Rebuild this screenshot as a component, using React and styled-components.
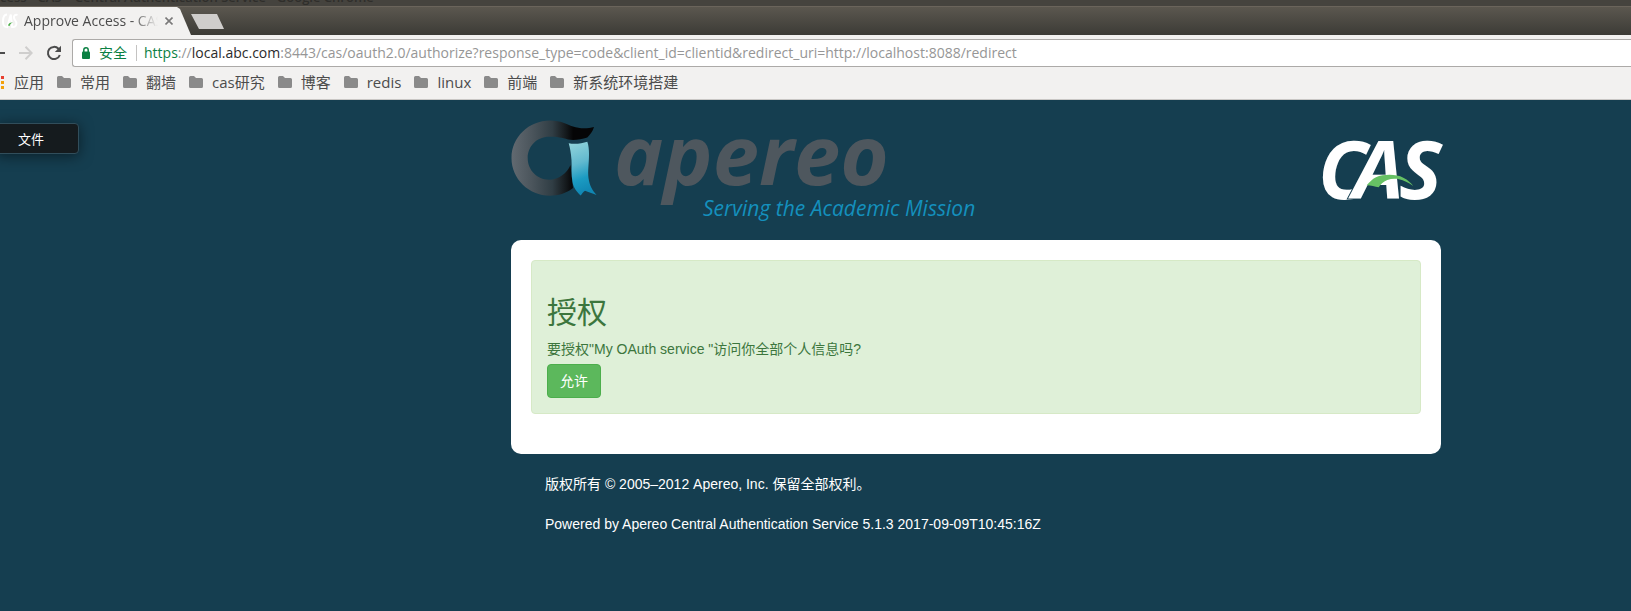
import React, { useId, useState } from 'react';
import styled, { createGlobalStyle } from 'styled-components';

const uiFont = '"Open Sans", "Noto Sans CJK SC", sans-serif';
const pageFont = '"Liberation Sans", "Noto Sans CJK SC", sans-serif';

const GlobalStyle = createGlobalStyle`
  *, *::before, *::after { box-sizing: border-box; }
  body { margin: 0; background: #153e50; overflow-x: hidden; }
`;

/* ---------- browser chrome ---------- */

const Browser = styled.div`
  display: flex;
  flex-direction: column;
  min-height: 100vh;
  font-family: ${uiFont};
  color: #4c4c4c;
`;

const TitleBar = styled.div`
  display: flex;
  align-items: flex-end;
  height: 6px;
  overflow: hidden;
  white-space: nowrap;
  background: #45433e;
  color: #2f2e2b;
  font-size: 13px;
  font-weight: 600;
  line-height: 12px;
  padding-bottom: 3px;
`;

const TabStrip = styled.div`
  display: flex;
  height: 29px;
  border-top: 1px solid #6a645b;
  background: linear-gradient(#5b574f, #3c3b36);
`;

const Tab = styled.div`
  display: flex;
  align-items: center;
  width: 191px;
  height: 28px;
  padding-left: 2px;
  background: #f2f1f0;
  clip-path: polygon(0 0, 177px 0, 180px 2px, 191px 100%, 0 100%);
`;

const TabTitle = styled.span`
  width: 134px;
  margin-left: 6px;
  overflow: hidden;
  white-space: nowrap;
  font-size: 14px;
  line-height: 20px;
  mask-image: linear-gradient(to right, #000 108px, transparent 134px);
`;

const BareButton = styled.button`
  display: inline-flex;
  align-items: center;
  justify-content: center;
  padding: 0;
  border: 0;
  background: none;
  cursor: pointer;
`;

const CloseTab = styled(BareButton)`
  width: 16px;
  height: 16px;
  margin-left: 3px;
`;

const NewTab = styled(BareButton)`
  width: 33px;
  height: 15px;
  margin-top: 7px;
  background: #cfcdcb;
  clip-path: polygon(0 0, 26px 0, 33px 100%, 8px 100%);
`;

const Toolbar = styled.div`
  display: flex;
  align-items: center;
  height: 36px;
  background: #f2f1f0;
`;

const NavButton = styled(BareButton)`
  width: ${p => p.$width}px;
  height: 28px;
  color: ${p => (p.$dim ? '#cfcecd' : '#4c4c4c')};
  justify-content: flex-start;
`;

const AddressBar = styled.form`
  display: flex;
  align-items: center;
  flex: 1;
  height: 28px;
  padding-left: 9px;
  border: 1px solid #acaaa8;
  border-right: 0;
  border-radius: 3px 0 0 3px;
  background: #fff;
  font-size: 14px;
`;

const Secure = styled.span`
  margin-left: 9px;
  padding-right: 9px;
  border-right: 1px solid #c4c3c2;
  line-height: 16px;
  font-size: 14px;
  color: #0b8043;
`;

const UrlField = styled.div`
  display: grid;
  flex: 1;
  margin-left: 7px;
  line-height: 20px;
  white-space: nowrap;

  > * { grid-area: 1 / 1; }
`;

const UrlInput = styled.input`
  width: 100%;
  padding: 0;
  border: 0;
  outline: 0;
  background: none;
  font: inherit;
  color: transparent;
  caret-color: #333;
`;

const UrlColours = styled.span`
  pointer-events: none;
  color: #969696;
`;

const Scheme = styled.span`color: #0b8043;`;
const Host = styled.span`color: #2b2b2b;`;

const Bookmarks = styled.nav`
  display: flex;
  align-items: center;
  gap: 13px;
  height: 29px;
  padding-bottom: 6px;
  border-bottom: 1px solid #c9c7c5;
  background: #f2f1f0;
`;

const Bookmark = styled.a`
  display: flex;
  align-items: center;
  gap: 9px;
  color: #4c4c4c;
  font-size: 15px;
  line-height: 20px;
  text-decoration: none;
  white-space: nowrap;
`;

/* ---------- CAS page ---------- */

const Page = styled.div`
  position: relative;
  flex: 1;
  padding: 0 0 40px 321px;
  background: #153e50;
  font-family: ${pageFont};
  font-size: 14px;
  line-height: 20px;
`;

const MenuTag = styled.button`
  position: absolute;
  top: 23px;
  left: -4px;
  width: 83px;
  height: 31px;
  padding: 0 0 0 21px;
  border: 1px solid #314e5b;
  border-radius: 4px;
  background: #151b1e;
  box-shadow: 0 2px 14px rgba(0, 0, 0, 0.5);
  color: #fff;
  font-family: ${pageFont};
  font-size: 13px;
  text-align: left;
`;

const Column = styled.div`
  max-width: 930px;
  margin: 0 auto;
`;

const Header = styled.header`
  display: flex;
  align-items: center;
  justify-content: space-between;
  padding: 19px 0;
`;

const Logo = styled.svg`
  display: block;
  flex: none;
  overflow: visible;
  font-family: "Open Sans", sans-serif;
  font-style: italic;
`;

const Card = styled.main`
  padding: 20px 20px 40px;
  border-radius: 10px;
  background: #fff;
`;

const Alert = styled.section`
  padding: 15px;
  border: 1px solid #d6e9c6;
  border-radius: 4px;
  background: #dff0d8;
  color: #3c763d;
`;

const Heading = styled.h2`
  margin: 20px 0 10px;
  font-size: 30px;
  font-weight: 400;
  line-height: 33px;
`;

const Question = styled.p`
  margin: 0 0 5px;
`;

const Allow = styled.button`
  display: block;
  padding: 6px 12px;
  border: 1px solid #4cae4c;
  border-radius: 4px;
  background: #5cb85c;
  color: #fff;
  font-family: inherit;
  font-size: 14px;
  line-height: 20px;
  cursor: pointer;
`;

const Footer = styled.footer`
  display: grid;
  gap: 20px;
  padding: 20px 34px;
  color: #fff;
`;

const FooterLine = styled.p`
  margin: 0;
`;

/* ---------- drawings ---------- */

function CasLogo({ width, height }) {
  return (
    <Logo width={width} height={height} viewBox="0 0 119 62" role="img" aria-label="CAS">
      <g fill="#fff" fontSize="81" fontWeight="700">
        <text x="-4" y="60">C</text>
        <text x="77" y="60">S</text>
        <text x="31" y="60" stroke="#153e50" strokeWidth="2" paintOrder="stroke">A</text>
      </g>
      <path
        fill="#66c164"
        d="M44.7 46.3C48 43 50 40 54 38.3C62 35 74 35 81.3 38.7C86 41 89 44 91.3 47C86 43.500 82 41 77 40.200C73 39.500 69 39.700 65.300 41C61 42.500 58.500 45.500 56.700 48.300C53 47.500 49 46.500 44.700 46.300Z"
      />
    </Logo>
  );
}

function Favicon() {
  return (
    <svg width="16" height="16" viewBox="0 0 16 16" aria-hidden="true">
      <g fill="none" stroke="#fff" strokeWidth="2">
        <path d="M5 1.500C1.500 1.500 1 5 1 8.500S2 14 4.500 14" />
        <path d="M5 15L8.800 1.500L10.200 15" />
        <path d="M15.500 2C12 .8 11 4.500 13 7C15.500 10 14.500 14.500 11 13.800" />
      </g>
      <path fill="#4db04a" d="M6 12.500C6.500 10 8.500 9 11.500 9.500C9.500 9.800 8.300 10.500 7.600 13Z" />
    </svg>
  );
}

function ApereoLogo() {
  const ring = useId();
  const ribbon = useId();
  return (
    <Logo width="467" height="102" viewBox="0 0 467 102" role="img" aria-label="apereo">
      <defs>
        <linearGradient id={ring} x1="0" x2="83" y1="0" y2="0" gradientUnits="userSpaceOnUse">
          <stop offset="0" stopColor="#626a71" />
          <stop offset="0.25" stopColor="#4b555c" />
          <stop offset="0.5" stopColor="#303d44" />
          <stop offset="0.66" stopColor="#151a1d" />
          <stop offset="0.75" stopColor="#050506" />
          <stop offset="1" stopColor="#050506" />
        </linearGradient>
        <linearGradient id={ribbon} x1="0" x2="0.2" y1="0" y2="1">
          <stop offset="0" stopColor="#95d6dc" />
          <stop offset="0.45" stopColor="#62b9cf" />
          <stop offset="0.75" stopColor="#1b9bc2" />
          <stop offset="1" stopColor="#1188b4" />
        </linearGradient>
      </defs>
      <path
        fill={`url(#${ring})`}
        d="M39 1.500C50 1.500 56 5.500 62 7.500C69 10 77 9.500 83 8C82 12 79 16 76.300 18.500C70 20.500 63 21.500 57 20.500C51 18.500 46 17.700 38 17.700C26 17.700 16.700 27 16.700 39C16.700 51 26 60.700 38 60.700C48 60.700 56 54 59.500 46L62 69C55 74.500 47 76.700 39 76.700C18 76.700 .5 60 .5 39C.5 18 18 1.500 39 1.500Z"
      />
      <path
        fill={`url(#${ribbon})`}
        d="M57.700 24.300C64 25.500 71 24.500 76.300 22.700C77.500 26 78 30 78 35C78 45 76.500 52 77.500 59C78.500 66 81 71 85.500 76C81 74 77.500 73 74 71.700C72 73 71 74.500 69.700 76.500C66 73 62.500 69 61.500 63C60 56 61 48 60.500 41C60 34 59 29 57.700 24.300Z"
      />
      <text x="103" y="66" fill="#4e575e" fontSize="83" fontWeight="700">apereo</text>
      <text x="192" y="97" fill="#1490bd" fontSize="21">Serving the Academic Mission</text>
    </Logo>
  );
}

function FolderIcon() {
  return (
    <svg width="14" height="12" viewBox="0 0 14 12" aria-hidden="true">
      <path fill="#8a8a8a" d="M0 1.500Q0 0 1.500 0H5L7 2H12.500Q14 2 14 3.500V10.500Q14 12 12.500 12H1.500Q0 12 0 10.500Z" />
    </svg>
  );
}

function AppsIcon() {
  return (
    <svg width="5" height="13" viewBox="0 0 5 13" aria-hidden="true">
      <rect x="1" width="3" height="3" fill="#e8402f" />
      <rect x="1" y="5" width="3" height="3" fill="#f2a10c" />
      <rect x="1" y="10" width="3" height="3" fill="#f2a10c" />
    </svg>
  );
}

const folders = ['常用', '翻墙', 'cas研究', '博客', 'redis', 'linux', '前端', '新系统环境搭建'];

const scheme = 'https';
const host = 'local.abc.com';
const rest =
  ':8443/cas/oauth2.0/authorize?response_type=code&client_id=clientid&redirect_uri=http://localhost:8088/redirect';

function Address() {
  const initial = `${scheme}://${host}${rest}`;
  const [url, setUrl] = useState(initial);
  return (
    <AddressBar onSubmit={e => e.preventDefault()}>
      <svg width="8" height="12" viewBox="0 0 8 12" aria-hidden="true">
        <path fill="none" stroke="#0b8043" strokeWidth="1.500" d="M1.800 6V3Q1.800 .8 4 .8T6.200 3V6" />
        <rect y="4.500" width="8" height="7.500" rx="1" fill="#0b8043" />
      </svg>
      <Secure>安全</Secure>
      <UrlField>
        <UrlColours aria-hidden="true">
          {url === initial ? (
            <><Scheme>{scheme}</Scheme>://<Host>{host}</Host>{rest}</>
          ) : url}
        </UrlColours>
        <UrlInput aria-label="URL" value={url} onChange={e => setUrl(e.target.value)} spellCheck={false} />
      </UrlField>
    </AddressBar>
  );
}

export default function App() {
  return (
    <Browser>
      <GlobalStyle />
      <TitleBar>cess - CAS – Central Authentication Service - Google Chrome</TitleBar>
      <TabStrip>
        <Tab>
          <Favicon />
          <TabTitle>Approve Access - CAS</TabTitle>
          <CloseTab aria-label="Close tab">
            <svg width="8" height="8" viewBox="0 0 8 8" aria-hidden="true">
              <path stroke="#7a7979" strokeWidth="1.600" d="M.5 .5L7.500 7.500M7.500 .5L.5 7.500" />
            </svg>
          </CloseTab>
        </Tab>
        <NewTab aria-label="New tab" />
      </TabStrip>
      <Toolbar>
        <NavButton $width={19} aria-label="Back">
          <svg width="5" height="14" viewBox="0 0 5 14" aria-hidden="true">
            <path stroke="currentColor" strokeWidth="2" d="M0 7H5" />
          </svg>
        </NavButton>
        <NavButton $width={27} $dim aria-label="Forward">
          <svg width="14" height="14" viewBox="0 0 14 14" fill="none" stroke="currentColor" strokeWidth="2" aria-hidden="true">
            <path d="M0 7H12.500M6.500 .8L12.700 7L6.500 13.200" />
          </svg>
        </NavButton>
        <NavButton $width={26} aria-label="Reload">
          <svg width="16" height="16" viewBox="0 0 16 16" aria-hidden="true">
            <path fill="none" stroke="currentColor" strokeWidth="2" d="M13.800 10A6.100 6.100 0 1 1 12.500 3.800L13 4.500" />
            <path fill="currentColor" d="M15 .8V7H8.800Z" />
          </svg>
        </NavButton>
        <Address />
      </Toolbar>
      <Bookmarks>
        <Bookmark href="#apps"><AppsIcon />应用</Bookmark>
        {folders.map(name => (
          <Bookmark key={name} href="#folder"><FolderIcon />{name}</Bookmark>
        ))}
      </Bookmarks>
      <Page>
        <MenuTag>文件</MenuTag>
        <Column>
          <Header>
            <ApereoLogo />
            <CasLogo width={119} height={62} />
          </Header>
          <Card>
            <Alert>
              <Heading>授权</Heading>
              <Question>要授权"My OAuth service "访问你全部个人信息吗?</Question>
              <Allow>允许</Allow>
            </Alert>
          </Card>
          <Footer>
            <FooterLine>版权所有 © 2005–2012 Apereo, Inc. 保留全部权利。</FooterLine>
            <FooterLine>Powered by Apereo Central Authentication Service 5.1.3 2017-09-09T10:45:16Z</FooterLine>
          </Footer>
        </Column>
      </Page>
    </Browser>
  );
}
